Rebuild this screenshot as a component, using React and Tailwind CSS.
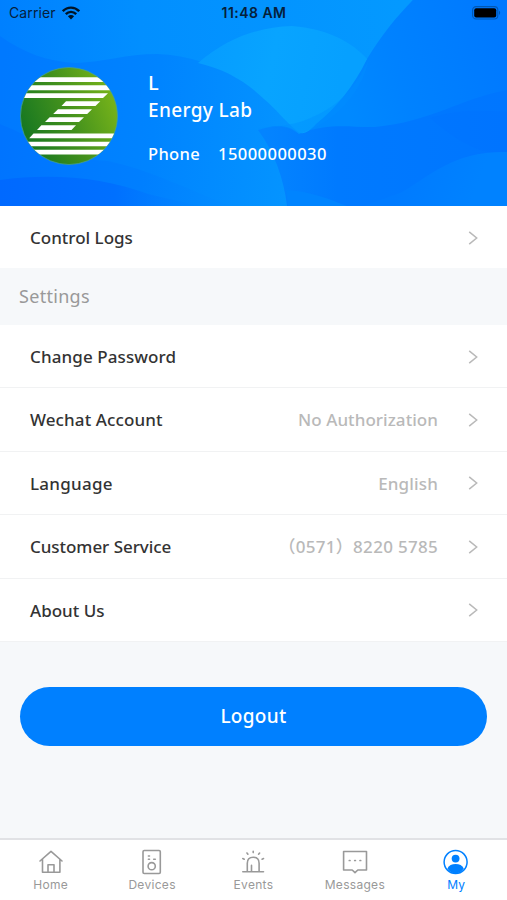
import React from "react";

const rows = [
  { label: "Change Password", labelSpacing: "tracking-[0.1px]" },
  { label: "Wechat Account", labelSpacing: "tracking-[0.1px]", value: "No Authorization", spacing: "tracking-[0.05px]" },
  { label: "Language", labelSpacing: "tracking-[0.25px]", value: "English", spacing: "tracking-[0.15px]" },
  { label: "Customer Service", labelSpacing: "tracking-[-0.05px]", value: "（0571）8220 5785", spacing: "tracking-[0.3px]" },
  { label: "About Us", labelSpacing: "tracking-normal" },
];

function HeaderWaves() {
  return (
    <svg
      className="absolute inset-0 w-full h-full"
      viewBox="0 0 507 206"
      preserveAspectRatio="none"
    >
      <defs>
        <linearGradient id="top" gradientUnits="userSpaceOnUse" x1="0" y1="30" x2="400" y2="0">
          <stop offset="0" stopColor="#0080ff" />
          <stop offset="0.35" stopColor="#028fff" />
          <stop offset="1" stopColor="#0499ff" />
        </linearGradient>
        <linearGradient id="middle" gradientUnits="userSpaceOnUse" x1="0" y1="100" x2="310" y2="130">
          <stop offset="0" stopColor="#0079ff" />
          <stop offset="0.5" stopColor="#0084ff" />
          <stop offset="1" stopColor="#0596ff" />
        </linearGradient>
        <linearGradient id="lower" gradientUnits="userSpaceOnUse" x1="0" y1="150" x2="287" y2="190">
          <stop offset="0" stopColor="#0074ff" />
          <stop offset="0.5" stopColor="#007fff" />
          <stop offset="1" stopColor="#0595ff" />
        </linearGradient>
        <linearGradient id="bottom" gradientUnits="userSpaceOnUse" x1="0" y1="190" x2="230" y2="190">
          <stop offset="0" stopColor="#0069ff" />
          <stop offset="0.5" stopColor="#0070ff" />
          <stop offset="1" stopColor="#038bff" stopOpacity="0" />
        </linearGradient>
        <linearGradient id="right" gradientUnits="userSpaceOnUse" x1="340" y1="90" x2="507" y2="40">
          <stop offset="0" stopColor="#0089ff" />
          <stop offset="0.35" stopColor="#0082ff" />
          <stop offset="1" stopColor="#0079ff" />
        </linearGradient>
        <linearGradient id="deep" gradientUnits="userSpaceOnUse" x1="265" y1="120" x2="507" y2="120">
          <stop offset="0" stopColor="#0484ff" />
          <stop offset="0.3" stopColor="#007aff" />
          <stop offset="1" stopColor="#0076ff" />
        </linearGradient>
        <linearGradient id="corner" gradientUnits="userSpaceOnUse" x1="400" y1="180" x2="470" y2="206">
          <stop offset="0" stopColor="#007bff" />
          <stop offset="1" stopColor="#0082ff" />
        </linearGradient>
        <linearGradient id="bright" gradientUnits="userSpaceOnUse" x1="198" y1="60" x2="340" y2="90">
          <stop offset="0" stopColor="#069cff" />
          <stop offset="0.5" stopColor="#08a4ff" />
          <stop offset="1" stopColor="#06a0ff" />
        </linearGradient>
      </defs>
      <rect width="507" height="206" fill="#007eff" />
      <path d="M0 0H413C396 20 382 42 367 60L310 132H0Z" fill="url(#top)" />
      <path
        d="M0 36C22 52 48 62 76 63C104 62 126 54 157 54C188 55 220 66 248 82C275 98 288 119 312 131V206H0Z"
        fill="url(#middle)"
      />
      <path
        d="M0 124C38 139 61 160 108 161C150 170 190 190 230 206H0Z"
        fill="url(#lower)"
      />
      <path d="M0 180C50 173 104 177 148 194L200 206H0Z" fill="url(#bottom)" />
      <path
        d="M413 0H507V92C466 104 436 124 397 127C358 130 330 123 299 134C330 115 350 88 367 59C381 36 396 17 413 0Z"
        fill="url(#right)"
      />
      <path
        d="M258 130C272 126 286 122 299 134C330 122 352 128 375 127C430 122 462 98 507 90V206H287C284 179 274 151 258 130Z"
        fill="url(#deep)"
      />
      <path
        d="M198 63C230 36 261 27 292 26C328 29 352 42 367 59C354 86 336 108 316 124C309 132 302 136 297 131C284 120 276 109 264 99C244 80 224 69 198 63Z"
        fill="url(#bright)"
      />
      <path d="M369 59C356 88 338 108 303 121C285 127 266 126 258 129C274 127 285 124 299 134C330 125 361 96 369 59Z" fill="#008fff" fillOpacity="0.4" />
      <path d="M430 118C455 110 480 110 507 112V154C485 154 462 146 430 118Z" fill="#006fff" fillOpacity="0.25" />
      <path d="M507 152C453 151 430 176 402 192C385 199 372 202 365 206H507Z" fill="url(#corner)" />
      <path d="M286 190C311 191 331 200 347 206H288Z" fill="#0084ff" />
    </svg>
  );
}

function Logo() {
  return (
    <svg className="w-[98px] h-[98px] shrink-0" viewBox="0 0 98 98">
      <defs>
        <linearGradient id="logoGreen" x1="0" y1="0.7" x2="1" y2="0.3">
          <stop offset="0" stopColor="#137521" />
          <stop offset="0.5" stopColor="#43911d" />
          <stop offset="1" stopColor="#7ab51a" />
        </linearGradient>
        <clipPath id="logoClip">
          <circle cx="49" cy="49" r="48.3" />
        </clipPath>
      </defs>
      <circle cx="49" cy="49" r="48.5" fill="url(#logoGreen)" stroke="#4ba391" strokeWidth="0.7" />
      <g fill="#fff" clipPath="url(#logoClip)">
        <path d="M0 10.3H98V15.1H0Z" />
        <path d="M0 18.3H98V23.2H0Z" />
        <path d="M0 26.3H88L83 31.1H0Z" />
        <path d="M46 34.2H80.3L75.5 39H41.5Z" />
        <path d="M38 42.3H72L67.2 47.1H33.2Z" />
        <path d="M29.7 50.3H64L59 55.1H25Z" />
        <path d="M21.4 58.3H56L51.5 63.1H17Z" />
        <path d="M13.5 66.5H98V71.2H9.2Z" />
        <path d="M0 74.7H98V79.3H0Z" />
        <path d="M0 82.8H98V87.5H0Z" />
      </g>
    </svg>
  );
}

function Arrow() {
  return (
    <svg className="w-[10px] h-4 shrink-0" viewBox="0 0 10 16" fill="none" stroke="#b9b9b9" strokeWidth="1.5">
      <path d="M1.2 1.8L8.7 8L1.2 14.2" />
    </svg>
  );
}

function TabIcon({ name }) {
  const props = {
    className: "w-[26px] h-[26px]",
    viewBox: "0 0 26 26",
    fill: "none",
    stroke: "currentColor",
    strokeWidth: 1.6,
    strokeLinejoin: "round",
    strokeLinecap: "round",
  };

  if (name === "Home") {
    return (
      <svg {...props}>
        <path d="M2 12L13 2.3L24 12M4.5 10V23.3H21.9V10M10 23V15.7H16V23" />
      </svg>
    );
  }
  if (name === "Devices") {
    return (
      <svg {...props}>
        <rect x="4" y="1.5" width="17.3" height="23" rx="1.2" />
        <circle cx="12.7" cy="17.2" r="3.6" />
        <path d="M9.4 7H10.5M9.4 10.3H10.5M14.7 10.3H16.3" />
      </svg>
    );
  }
  if (name === "Events") {
    return (
      <svg {...props}>
        <path d="M2.8 22.7H23.5M7.3 22.5V14.2C7.3 10.5 9.7 8.2 13.2 8.2S19.1 10.5 19.1 14.2V22.5M11.5 22V16.4" />
        <path d="M13.2 2.2V3.6M7 4L7.9 5.2M19.6 4L18.6 5.2M2.8 9.6L4.2 10.2M23.5 9.6L22.1 10.2" />
      </svg>
    );
  }
  if (name === "Messages") {
    return (
      <svg {...props}>
        <path d="M1.6 2.5H24.5V21H15.8L13 23.6L10.2 21H1.6Z" />
        <path d="M7.3 11.5H8M12.7 11.5H13.4M18 11.5H18.7" strokeWidth="1.7" />
      </svg>
    );
  }
  return (
    <svg {...props}>
      <circle cx="12.6" cy="13" r="11.5" strokeWidth="1.5" />
      <circle cx="12.6" cy="9.6" r="3.9" fill="currentColor" stroke="none" />
      <path d="M4.4 19.5C5.8 16.4 8.8 15 12.6 15S19.4 16.4 20.8 19.5C18.6 23 15.8 24.3 12.6 24.3S6.6 23 4.4 19.5Z" fill="currentColor" stroke="none" />
    </svg>
  );
}

export default function App() {
  return (
    <div className="w-[507px] h-[900px] overflow-hidden flex flex-col bg-[#f6f8fa] font-['Noto_Sans','Noto_Sans_CJK_SC',sans-serif]">
      <header className="relative h-[206px] shrink-0 bg-[#0080ff]">
        <HeaderWaves />
        <div className="relative h-7 grid grid-cols-3 items-center pl-[9px] pr-[6px] text-[#06203b] font-['Inter',sans-serif]">
          <div className="flex items-center gap-[6px] leading-5 pb-[2px]">
            <span className="text-[14px] tracking-[0.1px]">Carrier</span>
            <svg className="w-[18px] h-[14px]" viewBox="0 0 18 14" fill="none" stroke="#001426" strokeWidth="2.4">
              <path d="M0.8 5.2C5.5 0.4 12.5 0.4 17.2 5.2M3.8 8.2C6.8 5.1 11.2 5.1 14.2 8.2" />
              <path d="M5.9 10.3C7.7 8.7 10.3 8.7 12.1 10.3L9 13.5Z" fill="#001426" stroke="none" />
            </svg>
          </div>
          <span className="justify-self-center -ml-[2px] pb-[2px] text-[14px] leading-5 font-semibold tracking-[0.45px] whitespace-nowrap">11:48 AM</span>
          <svg className="w-[29px] h-[14px] justify-self-end -mt-[2px]" viewBox="0 0 29 14">
            <rect x="0.6" y="0.6" width="25.2" height="12.4" rx="3.5" fill="none" stroke="#0058b4" strokeWidth="1.1" />
            <rect x="2.2" y="2.2" width="22" height="9.2" rx="2" fill="#000" />
            <path d="M27 4.8C28.6 5.5 28.6 8.3 27 9Z" fill="#0058b4" />
          </svg>
        </div>
        <div className="relative flex pl-5 pt-[38.5px] text-white font-medium">
          <Logo />
          <div className="ml-[30px] flex flex-col">
            <span className="text-[20px] leading-7 mt-[2px]">L</span>
            <span className="text-[19px] leading-[26px] tracking-[0.35px]">Energy Lab</span>
            <div className="flex gap-[18px] mt-[19px] text-[16.5px] leading-6">
              <span className="tracking-[0.35px]">Phone</span>
              <span className="tracking-[0.45px]">15000000030</span>
            </div>
          </div>
        </div>
      </header>

      <div className="h-[62px] shrink-0 flex items-center justify-between bg-white pl-[30px] pr-[29px] pt-[2px]">
        <span className="text-[17px] font-medium text-[#333]">Control Logs</span>
        <Arrow />
      </div>

      <div className="h-[57px] shrink-0 flex items-center pl-[19px] text-[18px] tracking-[0.3px] text-[#999]">Settings</div>

      {rows.map((row) => (
        <div
          key={row.label}
          className="h-[63.4px] shrink-0 flex items-center bg-white border-b border-[#f1f2f3] pl-[30px] pr-[29px] pt-px"
        >
          <span className={`text-[17px] font-medium text-[#333] ${row.labelSpacing}`}>{row.label}</span>
          {row.value && (
            <span className={`ml-auto mr-[30px] text-[17px] font-medium text-[#b9b9b9] whitespace-nowrap ${row.spacing}`}>
              {row.value}
            </span>
          )}
          <div className={row.value ? "" : "ml-auto"}>
            <Arrow />
          </div>
        </div>
      ))}

      <button className="mx-5 mt-[45px] h-[59px] shrink-0 rounded-full bg-[#0080ff] text-white text-[19px] font-medium tracking-[0.3px]">
        Logout
      </button>

      <nav className="mt-auto h-[62px] shrink-0 grid grid-cols-5 bg-white border-t-2 border-[#e1e2e5] font-['Inter',sans-serif]">
        {["Home", "Devices", "Events", "Messages", "My"].map((tab) => (
          <div
            key={tab}
            className={`flex flex-col items-center pt-[9px] text-[12px] leading-[19px] tracking-[0.3px] ${
              tab === "My" ? "text-[#0080ff]" : "text-[#999]"
            }`}
          >
            <TabIcon name={tab} />
            <span>{tab}</span>
          </div>
        ))}
      </nav>
    </div>
  );
}
